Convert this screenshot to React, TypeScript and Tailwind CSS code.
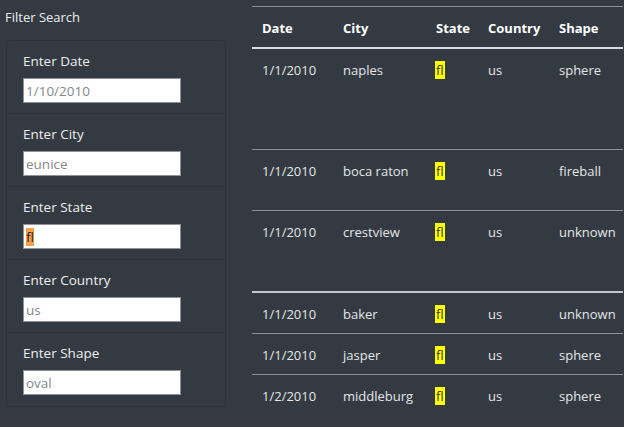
import React from "react";

const filters = [
  { label: "Enter Date", value: "1/10/2010" },
  { label: "Enter City", value: "eunice" },
  { label: "Enter State", value: "fl", selected: true },
  { label: "Enter Country", value: "us" },
  { label: "Enter Shape", value: "oval" },
];

const rows = [
  { date: "1/1/2010", city: "naples", shape: "sphere", h: "h-[101px]", border: "border-b border-[#8d9197]" },
  { date: "1/1/2010", city: "boca raton", shape: "fireball", h: "h-[61px]", border: "border-b border-[#8d9197]" },
  { date: "1/1/2010", city: "crestview", shape: "unknown", h: "h-[82px]", border: "border-b-2 border-[#c3c6ca]" },
  { date: "1/1/2010", city: "baker", shape: "unknown", h: "h-[41px]", border: "border-b border-[#8d9197]" },
  { date: "1/1/2010", city: "jasper", shape: "sphere", h: "h-[41px]", border: "border-b border-[#8d9197]" },
  { date: "1/2/2010", city: "middleburg", shape: "sphere", h: "h-[41px]", border: "" },
];

const cols = "grid grid-cols-[81px_93px_52px_71px_1fr]";

export default function App() {
  return (
    <main
      className="flex h-[427px] w-[624px] overflow-hidden bg-[#343a41] text-[13px] text-[#e4e6e8]"
      style={{ fontFamily: "'Open Sans', 'Noto Sans', sans-serif" }}
    >
      {/* filter column */}
      <div className="w-[252px] shrink-0 pl-[5px] pt-[7px]">
        <div className="h-[20px] leading-[20px] text-[#eceef0]">Filter Search</div>
        <div className="ml-px mt-[13px] w-[220px] rounded-[4px] border border-[#2e3238]">
          {filters.map((f, i) => (
            <div
              key={f.label}
              className={`h-[73px] px-[16px] pt-[11px] ${i < filters.length - 1 ? "border-b border-[#2e3238]" : ""}`}
            >
              <div className="h-[18px] text-[13.5px] leading-[18px] text-[#eceef0]">{f.label}</div>
              <div className="mt-[8px] flex h-[25px] w-[158px] items-center border border-[#8f9398] bg-white px-[2px] text-[13.5px]">
                {f.selected ? (
                  <span className="bg-[#f5a14b] leading-[18px] text-[#222]">{f.value}</span>
                ) : (
                  <span className="leading-[18px] text-[#85888c]">{f.value}</span>
                )}
              </div>
            </div>
          ))}
        </div>
      </div>

      {/* results table */}
      <div className="mr-px mt-[6px] flex-1 border-t border-[#8d9197]">
        <div className={`${cols} h-[42px] items-start border-b-2 border-[#d8dadd] pt-[11px] font-bold leading-[20px] text-white`}>
          <div className="pl-[10px]">Date</div>
          <div className="pl-[10px]">City</div>
          <div className="pl-[10px]">State</div>
          <div className="pl-[10px]">Country</div>
          <div className="pl-[10px]">Shape</div>
        </div>
        {rows.map((r, i) => (
          <div key={i} className={`${cols} ${r.h} ${r.border} items-start pt-[11px] leading-[20px]`}>
            <div className="pl-[10px]">{r.date}</div>
            <div className="pl-[10px]">{r.city}</div>
            <div className="pl-[9px]">
              <mark className="bg-[#ffff00] px-px text-[#333]">fl</mark>
            </div>
            <div className="pl-[10px]">us</div>
            <div className="pl-[10px]">{r.shape}</div>
          </div>
        ))}
      </div>
    </main>
  );
}
